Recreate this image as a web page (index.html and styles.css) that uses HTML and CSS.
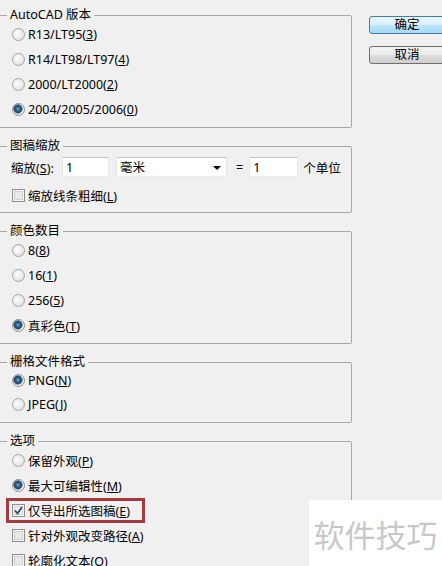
FILE: index.html
```html
<!DOCTYPE html>
<html lang="zh-CN">

<head>
    <meta charset="UTF-8">
    <meta name="viewport" content="width=device-width, initial-scale=1.0">
    <title>导出选项</title>
    <link rel="stylesheet" href="styles.css">
</head>

<body>
    <div class="dialog">
        <div class="panel">
            <fieldset class="group">
                <legend>AutoCAD 版本</legend>
                <div class="opt"><span class="radio"></span><span>R13/LT95(<u>3</u>)</span></div>
                <div class="opt"><span class="radio"></span><span>R14/LT98/LT97(<u>4</u>)</span></div>
                <div class="opt"><span class="radio"></span><span>2000/LT2000(<u>2</u>)</span></div>
                <div class="opt"><span class="radio on"></span><span>2004/2005/2006(<u>0</u>)</span></div>
            </fieldset>

            <fieldset class="group group-scale">
                <legend>图稿缩放</legend>
                <div class="scale-row">
                    <span class="scale-label">缩放(<u>S</u>):</span>
                    <input class="field field-a" type="text" value="1">
                    <div class="field dropdown">毫米<span class="caret"></span></div>
                    <span class="eq">=</span>
                    <input class="field field-b" type="text" value="1">
                    <span class="unit">个单位</span>
                </div>
                <div class="opt opt-check"><span class="check"></span><span>缩放线条粗细(<u>L</u>)</span></div>
            </fieldset>

            <fieldset class="group">
                <legend>颜色数目</legend>
                <div class="opt"><span class="radio"></span><span>8(<u>8</u>)</span></div>
                <div class="opt"><span class="radio"></span><span>16(<u>1</u>)</span></div>
                <div class="opt"><span class="radio"></span><span>256(<u>5</u>)</span></div>
                <div class="opt"><span class="radio on"></span><span>真彩色(<u>T</u>)</span></div>
            </fieldset>

            <fieldset class="group group-raster">
                <legend>栅格文件格式</legend>
                <div class="opt"><span class="radio on"></span><span>PNG(<u>N</u>)</span></div>
                <div class="opt"><span class="radio"></span><span>JPEG(<u>J</u>)</span></div>
            </fieldset>

            <fieldset class="group group-last">
                <legend>选项</legend>
                <div class="opt"><span class="radio"></span><span>保留外观(<u>P</u>)</span></div>
                <div class="opt"><span class="radio on"></span><span>最大可编辑性(<u>M</u>)</span></div>
                <div class="opt marked"><span class="check on">
                        <svg width="9" height="9" viewBox="0 0 9 9">
                            <path d="M1 4.5 L3.5 7.5 L8 1" fill="none" stroke="#2a4a75" stroke-width="1.8" />
                        </svg>
                    </span><span>仅导出所选图稿(<u>E</u>)</span></div>
                <div class="opt"><span class="check"></span><span>针对外观改变路径(<u>A</u>)</span></div>
                <div class="opt"><span class="check"></span><span>轮廓化文本(<u>O</u>)</span></div>
            </fieldset>
        </div>

        <div class="actions">
            <button class="btn btn-default">确定</button>
            <button class="btn">取消</button>
        </div>
    </div>

    <div class="watermark">软件技巧</div>
</body>

</html>
```

FILE: styles.css
```css
body {
    margin: 0;
    height: 566px;
    overflow: hidden;
    background-color: #f0f0f0;
    color: #000;
    font-family: "Noto Sans", "Noto Sans CJK SC", sans-serif;
    font-size: 12.5px;
}

.dialog {
    display: flex;
    align-items: flex-start;
}

.panel {
    flex: none;
    width: 355px;
    margin-left: -3px;
    padding-top: 7px;
}

.group {
    margin: 0 0 10px;
    padding: 0 10px 7px 14px;
    border: 1px solid #a8a8a8;
    border-radius: 2px;
    min-width: 0;
}

.group legend {
    margin-left: -5px;
    padding: 0 3px;
    line-height: 16px;
}

.opt {
    display: flex;
    align-items: center;
    gap: 3px;
    height: 22px;
    white-space: nowrap;
}

.opt + .opt {
    margin-top: 3px;
}

.group-scale {
    padding-bottom: 6px;
}

.group-raster {
    padding-bottom: 8px;
}

.group-raster .opt {
    height: 20px;
}

.group-raster .opt + .opt {
    margin-top: 4px;
}

.group-last {
    height: 200px;
}

/* 单选框 */
.radio {
    flex: none;
    box-sizing: border-box;
    width: 13px;
    height: 13px;
    border: 1px solid #a4a4a4;
    border-radius: 50%;
    background: radial-gradient(circle at 40% 40%, #fdfdfd 0, #e8e8e8 60%, #d6d6d6 100%);
}

.radio.on {
    border-color: #8a8f94;
    background: radial-gradient(circle at 45% 45%, #9fc3dc 0, #3d6f96 1.5px, #1f4566 3.5px, #6d8ea8 4.5px, #f2f2f2 5px, #dcdcdc 100%);
}

/* 复选框 */
.check {
    flex: none;
    box-sizing: border-box;
    width: 13px;
    height: 13px;
    border: 1px solid #8e8f8f;
    background: #e9e9e9;
    box-shadow: inset 0 0 0 1px #f6f6f6, inset 0 0 0 2px #d0d0d0;
    display: flex;
    justify-content: center;
    align-items: center;
}

.check.on {
    background: #eef2f6;
}

.opt-check {
    margin-top: 7px;
}

.marked {
    position: relative;
}

.marked::after {
    content: "";
    position: absolute;
    left: -6px;
    top: -1px;
    width: 139px;
    height: 25px;
    box-sizing: border-box;
    border: 3px solid #a6393c;
}

/* 缩放行 */
.scale-row {
    display: flex;
    align-items: center;
    height: 20px;
    margin-top: 3px;
}

.scale-label {
    width: 51px;
    margin-left: -1px;
}

.field {
    box-sizing: border-box;
    height: 20px;
    margin: 0;
    padding: 0 3px;
    border: 1px solid;
    border-color: #c4c6cb #e3e6ea #e8ebee #e3e6ea;
    background: #fff;
    font: inherit;
    line-height: 18px;
    outline: none;
}

.field-a {
    width: 47px;
}

.field-b {
    width: 49px;
}

.dropdown {
    position: relative;
    width: 111px;
    margin-left: 7px;
    padding-top: 1px;
}

.caret {
    position: absolute;
    right: 5px;
    top: 8px;
    border-left: 4px solid transparent;
    border-right: 4px solid transparent;
    border-top: 4px solid #000;
}

.eq {
    margin: 0 6px 0 9px;
}

.unit {
    margin-left: 5px;
}

/* 按钮 */
.actions {
    display: flex;
    flex-direction: column;
    margin-left: 17px;
    padding-top: 16px;
}

.btn {
    box-sizing: border-box;
    width: 76px;
    height: 18px;
    padding: 0;
    border: 1px solid #707070;
    border-radius: 3px;
    background: linear-gradient(#f2f2f2 0, #ebebeb 50%, #dddddd 50%, #cfcfcf 100%);
    font: inherit;
    line-height: 16px;
    color: #000;
}

.btn + .btn {
    margin-top: 12px;
}

.btn-default {
    border-color: #3c7fb1;
    background: linear-gradient(#eaf6fd 0, #d9f0fc 50%, #bee6fd 50%, #a7d9f5 100%);
}

.watermark {
    position: absolute;
    left: 309px;
    top: 500px;
    width: 133px;
    height: 66px;
    display: flex;
    justify-content: center;
    align-items: center;
    background: #fff;
    color: #c8c8c8;
    font-family: "Noto Sans CJK SC", sans-serif;
    font-size: 31px;
}
```
